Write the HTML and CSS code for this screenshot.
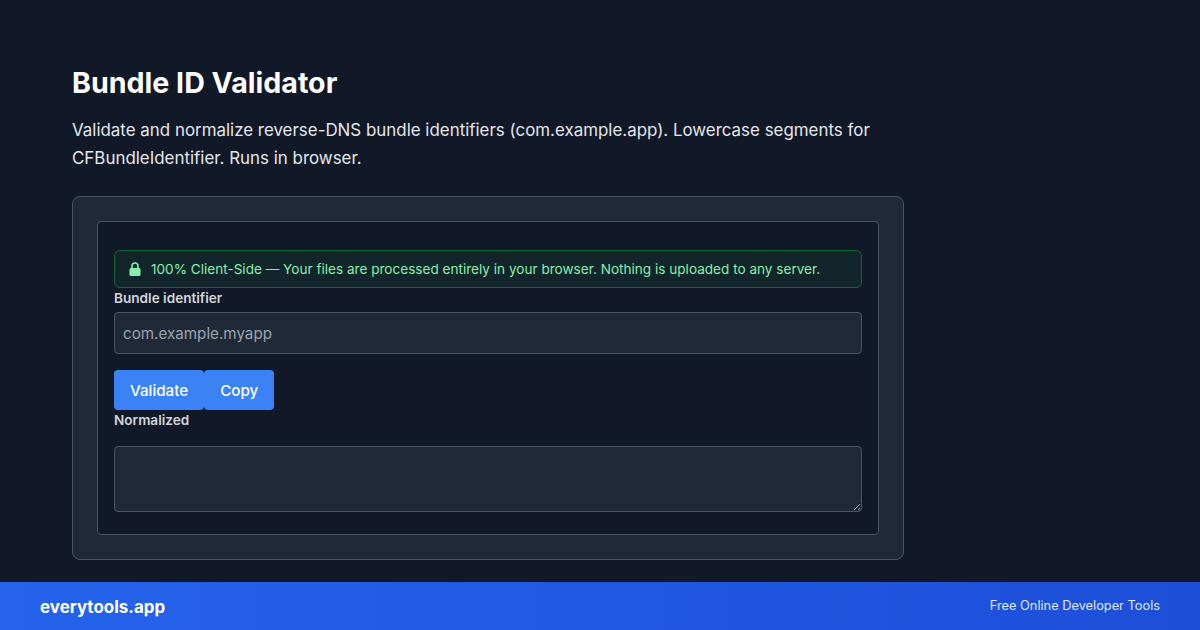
FILE: index.html
```html
<!DOCTYPE html>
<html lang="en">
<head>
<meta charset="utf-8">
<title>Bundle ID Validator</title>
<link rel="stylesheet" href="styles.css">
</head>
<body>
<main class="page">
  <h1 class="title">Bundle ID Validator</h1>
  <p class="lede">Validate and normalize reverse-DNS bundle identifiers (com.example.app). Lowercase segments for CFBundleIdentifier. Runs in browser.</p>
  <section class="card">
    <div class="panel">
      <div class="notice">
        <svg class="lock" viewBox="0 0 12 14" width="12" height="14" aria-hidden="true"><path class="shackle" d="M3 6.5V4a3 3 0 0 1 6 0v2.5"/><rect class="body-lock" x="0.5" y="6" width="11" height="8" rx="1.6"/></svg>
        <span>100% Client-Side — Your files are processed entirely in your browser. Nothing is uploaded to any server.</span>
      </div>
      <label class="label" for="bid">Bundle identifier</label>
      <input class="input" id="bid" type="text" placeholder="com.example.myapp">
      <div class="actions">
        <button class="btn" type="button">Validate</button>
        <button class="btn" type="button">Copy</button>
      </div>
      <label class="label label-out" for="out">Normalized</label>
      <textarea class="output" id="out"></textarea>
    </div>
  </section>
</main>
<footer class="footer">
  <span class="brand">everytools.app</span>
  <span class="tagline">Free Online Developer Tools</span>
</footer>
</body>
</html>
```
FILE: styles.css
```css
* { box-sizing: border-box; }
html, body { margin: 0; height: 630px; overflow: hidden; }
body {
  display: flex;
  flex-direction: column;
  background: #111827;
  color: #f3f4f6;
  font-family: Inter, "Liberation Sans", sans-serif;
}
.page { flex: 1; padding: 65px 72px 0; min-height: 0; }
.title { margin: 0; font-size: 28.6px; line-height: 36px; font-weight: 700; color: #fff; }
.lede { margin: 15px 0 24px; width: 832px; font-size: 16.92px; line-height: 28px; color: #e5e7eb; }
.card {
  width: 832px;
  height: 364px;
  padding: 24px;
  background: #1f2937;
  border: 1px solid #4b5563;
  border-radius: 8px;
}
.panel {
  height: 314px;
  padding: 28px 16px 0;
  background: #111827;
  border: 1px solid #4b5563;
  border-radius: 4px;
}
.notice {
  display: flex;
  align-items: center;
  gap: 10px;
  height: 38px;
  padding: 0 14px;
  background: rgba(34, 197, 94, 0.08);
  border: 1px solid #166534;
  border-radius: 6px;
  color: #86efac;
  font-size: 13.58px;
}
.lock { flex: none; margin-top: -1px; }
.shackle { fill: none; stroke: #86efac; stroke-width: 1.6; }
.body-lock { fill: #86efac; }
.label { display: block; font-size: 13.6px; line-height: 20px; font-weight: 600; color: #d1d5db; }
.input, .output {
  display: block;
  width: 100%;
  background: #1f2937;
  border: 1px solid #4b5563;
  border-radius: 4px;
  color: #f3f4f6;
  font-family: inherit;
  font-size: 15.2px;
}
.input { height: 42px; padding: 0 8px; margin-top: 4px; }
.input::placeholder { color: #9ca3af; opacity: 1; }
.output { height: 66px; margin-top: 16px; padding: 8px; }
.actions { display: flex; margin-top: 16px; }
.btn {
  height: 40px;
  padding: 0 16px;
  background: #3b82f6;
  border: 0;
  border-radius: 4px;
  color: #fff;
  font-family: inherit;
  font-size: 15.2px;
  font-weight: 500;
}
.label-out { margin-top: 0; }
.footer {
  flex: none;
  height: 48px;
  display: flex;
  align-items: center;
  justify-content: space-between;
  padding: 0 40px;
  background: linear-gradient(90deg, #2563eb, #1d4ed8);
}
.brand { font-size: 16.96px; font-weight: 700; color: #fff; margin-top: 2px; }
.tagline { font-size: 12.8px; color: #dbeafe; margin-top: -1px; }
```
